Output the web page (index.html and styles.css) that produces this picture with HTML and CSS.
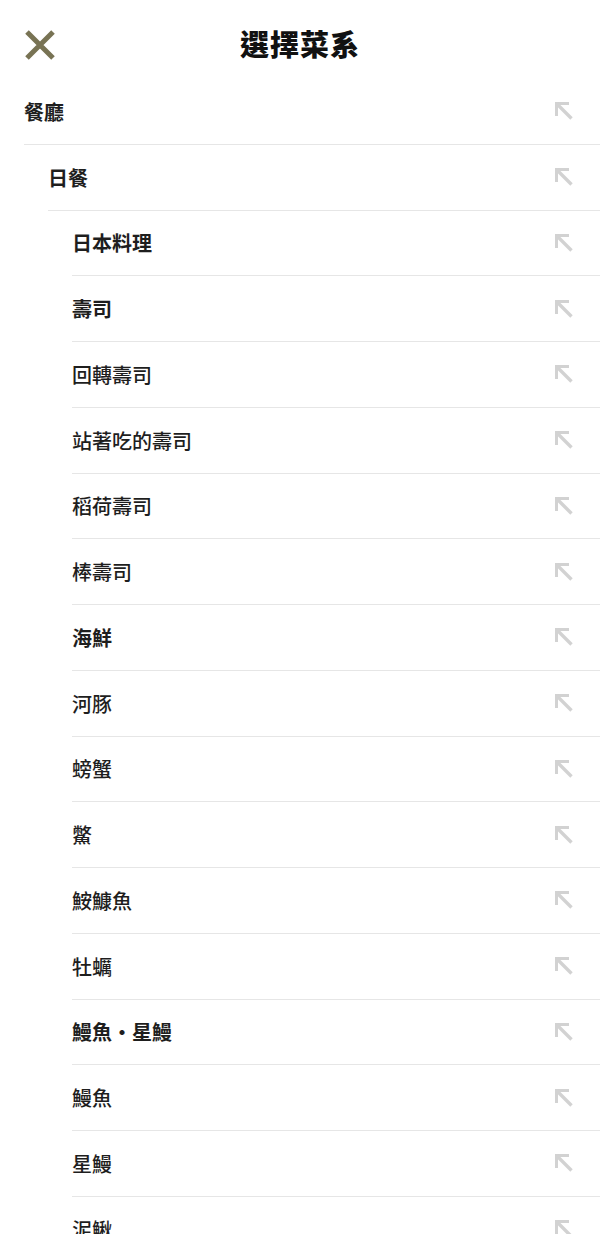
FILE: index.html
```html
<!DOCTYPE html>
<html lang="zh-Hant">
<head>
  <meta charset="UTF-8">
  <title>選擇菜系</title>
  <link rel="stylesheet" href="styles.css">
</head>
<body>
  <header class="top">
    <button class="close" aria-label="關閉">
      <svg width="32" height="32" viewBox="0 0 32 32"><path d="M3 3 L29 29 M29 3 L3 29" stroke="#787354" stroke-width="5"/></svg>
    </button>
    <h1>選擇菜系</h1>
  </header>

  <ul class="list" id="list"></ul>

  <script>
    const items = [
      ["餐廳", 0, true],
      ["日餐", 1, true],
      ["日本料理", 2, true],
      ["壽司", 2, true],
      ["回轉壽司", 2, false],
      ["站著吃的壽司", 2, false],
      ["稻荷壽司", 2, false],
      ["棒壽司", 2, false],
      ["海鮮", 2, true],
      ["河豚", 2, false],
      ["螃蟹", 2, false],
      ["鱉", 2, false],
      ["鮟鱇魚", 2, false],
      ["牡蠣", 2, false],
      ["鰻魚・星鰻", 2, true],
      ["鰻魚", 2, false],
      ["星鰻", 2, false],
      ["泥鰍", 2, false]
    ];
    const arrow = '<svg width="20" height="20" viewBox="0 0 20 20"><path d="M2.5 15 V2.5 H15" fill="none" stroke="#d2d2d2" stroke-width="3"/><path d="M3 3 L17.5 17.5" stroke="#d2d2d2" stroke-width="3.4"/></svg>';
    const list = document.getElementById("list");
    items.forEach(([name, level, bold]) => {
      const li = document.createElement("li");
      li.className = "row lv" + level + (bold ? " bold" : "");
      li.innerHTML = '<span class="name">' + name + '</span><span class="arrow">' + arrow + '</span>';
      list.appendChild(li);
    });
  </script>
</body>
</html>
```

FILE: styles.css
```css
body {
  margin: 0;
  font-family: "Noto Sans CJK TC", "Noto Sans", sans-serif;
  background: #fff;
  color: #1e1e1e;
}
.top {
  height: 79px;
  display: flex;
  align-items: center;
  justify-content: center;
  position: relative;
}
.top h1 {
  margin: 6px 0 0;
  font-size: 29px;
  font-weight: 900;
  letter-spacing: 1px;
  color: #111;
}
.close {
  position: absolute;
  left: 24px;
  top: 29px;
  padding: 0;
  border: none;
  background: none;
  width: 32px;
  height: 32px;
}
.close svg {
  display: block;
}
.list {
  list-style: none;
  margin: 0;
  padding: 0;
}
.row {
  height: 64.75px;
  display: flex;
  align-items: center;
  justify-content: space-between;
  border-bottom: 1px solid #e6e6e6;
  padding-right: 26px;
}
.lv0 { margin-left: 24px; }
.lv1 { margin-left: 48px; }
.lv2 { margin-left: 72px; }
.name {
  font-size: 20px;
  font-weight: 500;
}
.bold .name {
  font-weight: 700;
}
.arrow svg {
  display: block;
}
```
